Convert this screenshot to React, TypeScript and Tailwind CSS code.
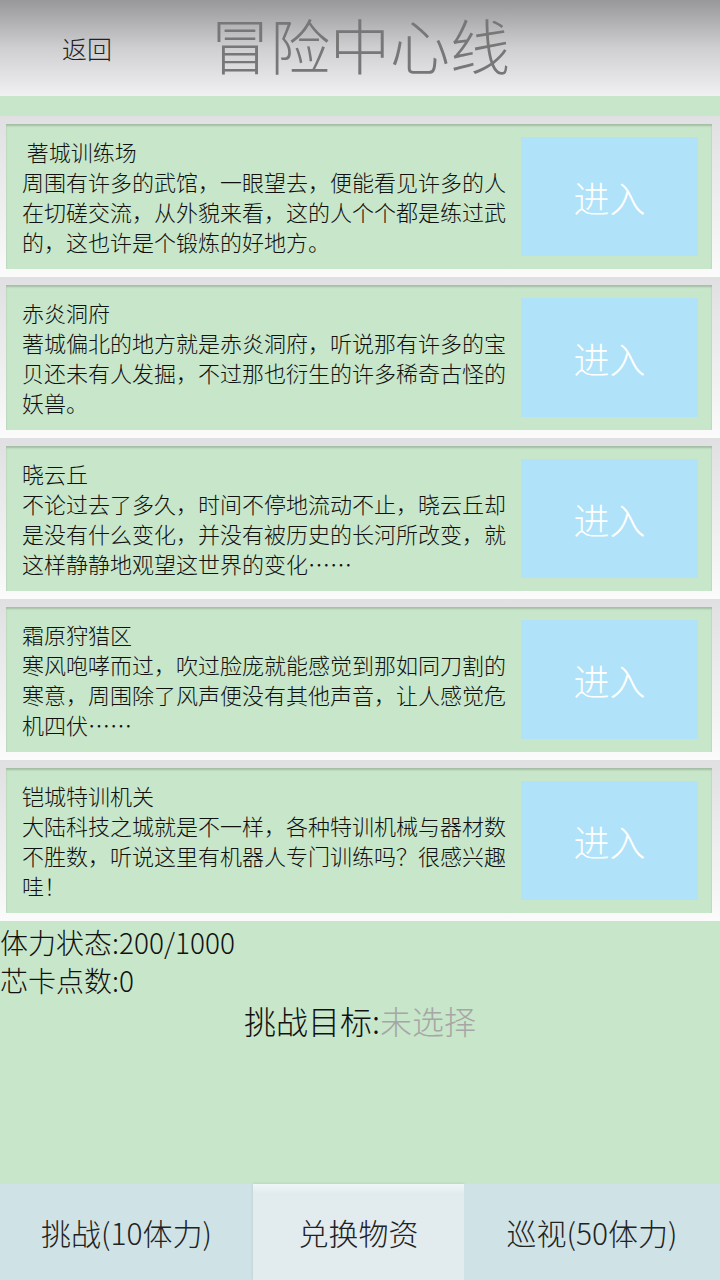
const places = [
  {
    name: ' 著城训练场',
    desc: '周围有许多的武馆，一眼望去，便能看见许多的人在切磋交流，从外貌来看，这的人个个都是练过武的，这也许是个锻炼的好地方。',
  },
  {
    name: '赤炎洞府',
    desc: '著城偏北的地方就是赤炎洞府，听说那有许多的宝贝还未有人发掘，不过那也衍生的许多稀奇古怪的妖兽。',
  },
  {
    name: '晓云丘',
    desc: '不论过去了多久，时间不停地流动不止，晓云丘却是没有什么变化，并没有被历史的长河所改变，就这样静静地观望这世界的变化……',
  },
  {
    name: '霜原狩猎区',
    desc: '寒风咆哮而过，吹过脸庞就能感觉到那如同刀割的寒意，周围除了风声便没有其他声音，让人感觉危机四伏……',
  },
  {
    name: '铠城特训机关',
    desc: '大陆科技之城就是不一样，各种特训机械与器材数不胜数，听说这里有机器人专门训练吗？很感兴趣哇！',
  },
];

export default function App() {
  return (
    <div
      className="w-[720px] h-[1280px] flex flex-col bg-[#c8e6c9] overflow-hidden"
      style={{ fontFamily: '"Noto Sans CJK SC", "DejaVu Sans", sans-serif' }}
    >
      {/* Header */}
      <div className="h-[96px] shrink-0 flex items-center bg-gradient-to-b from-[#98989b] via-[#cfcfd2] to-[#f1f0f3]">
        <button className="ml-[62px] text-[25px] leading-[32px] text-[#222] font-light">返回</button>
        <h1 className="ml-[98px] mb-[8px] text-[60px] leading-[72px] text-[#777777] font-light">
          冒险中心线
        </h1>
      </div>

      <div className="h-[20px] shrink-0 bg-[#c8e6c9]" />

      {/* Place list */}
      {places.map((p) => (
        <div
          key={p.name}
          className="h-[161px] shrink-0 pt-[8px] pl-[6px] pr-[8px] pb-[8px] bg-gradient-to-b from-[#e0dfe2] to-[#fbfbfb]"
        >
          <div className="h-full flex bg-[#c8e6c9] shadow-[inset_0_2px_2px_rgba(0,0,0,0.18)]">
            <div className="w-[504px] shrink-0 pl-[16px] pt-[12px] text-[22px] leading-[30px] text-[#111] font-light">
              <div className="whitespace-pre">{p.name}</div>
              <p>{p.desc}</p>
            </div>
            <button className="ml-auto mr-[14px] my-[13px] w-[177px] bg-[#b0e3f9] text-white text-[36px] font-light flex items-center justify-center">
              进入
            </button>
          </div>
        </div>
      ))}

      {/* Status */}
      <div className="flex-1 bg-[#c8e6c9] pt-[2px] text-[#111] font-light">
        <div className="text-[28px] leading-[38px]">体力状态:200/1000</div>
        <div className="text-[28px] leading-[38px]">芯卡点数:0</div>
        <div className="text-[32px] leading-[42px] text-center">
          挑战目标:<span className="text-[#a6a6a6]">未选择</span>
        </div>
      </div>

      {/* Bottom bar */}
      <div className="h-[96px] shrink-0 flex text-[30px] text-[#222] font-light">
        <button className="w-[253px] bg-[#cfe3e6] flex items-center justify-center">挑战(10体力)</button>
        <button className="w-[211px] bg-gradient-to-b from-[#eef6f7] to-[#e2ebee] to-[10%] shadow-[0_0_3px_rgba(0,0,0,0.12)] flex items-center justify-center">
          兑换物资
        </button>
        <button className="flex-1 bg-[#cfe3e6] flex items-center justify-center">巡视(50体力)</button>
      </div>
    </div>
  );
}
